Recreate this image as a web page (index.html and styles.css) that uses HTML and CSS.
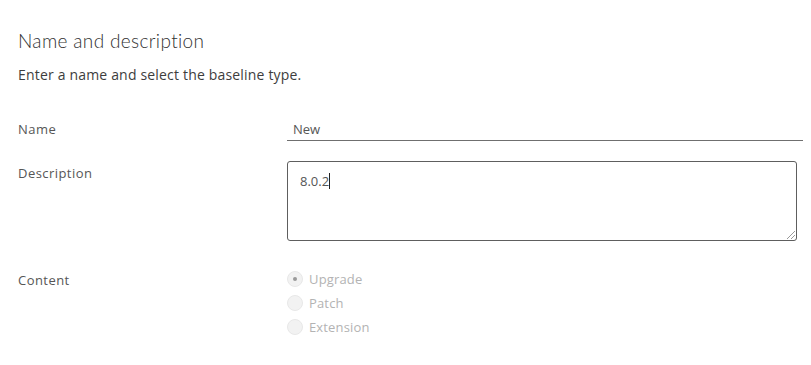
FILE: index.html
```html
<!DOCTYPE html>
<html lang="en">
    <head>
        <meta charset="UTF-8">
        <title>Name and description</title>
        <link rel="stylesheet" href="styles.css">
    </head>
    <body>
        <div class="wizard-page">
            <h2 class="page-title">Name and description</h2>
            <p class="page-intro">Enter a name and select the baseline type.</p>

            <form class="baseline-form">
                <div class="form-row name-row">
                    <label class="row-label" for="name">Name</label>
                    <div class="row-control">
                        <input class="line-input" type="text" id="name" value="New">
                    </div>
                </div>

                <div class="form-row desc-row">
                    <label class="row-label" for="description">Description</label>
                    <div class="row-control">
                        <div class="text-box" id="description">8.0.2<span class="caret"></span></div>
                    </div>
                </div>

                <div class="form-row">
                    <span class="row-label">Content</span>
                    <div class="row-control radio-list">
                        <label class="radio-item"><span class="radio-dot checked"></span>Upgrade</label>
                        <label class="radio-item"><span class="radio-dot"></span>Patch</label>
                        <label class="radio-item"><span class="radio-dot"></span>Extension</label>
                    </div>
                </div>
            </form>
        </div>
    </body>
</html>
```

FILE: styles.css
```css
body {
margin: 0;
padding: 0;
background-color: #ffffff;
font-family: "Open Sans", "Lato", sans-serif;
color: #565656;
}

.wizard-page {
padding: 29px 8px 0 18px;
}

.page-title {
margin: 0;
font-family: "Lato", sans-serif;
font-size: 19px;
font-weight: 300;
color: #313131;
line-height: 24px;
letter-spacing: 0.35px;
}

.page-intro {
margin: 13px 0 0 0;
font-size: 14px;
line-height: 18px;
color: #3d3d3d;
letter-spacing: 0.18px;
}

/* Form rows */
.baseline-form {
margin-top: 33px;
}

.form-row {
display: grid;
grid-template-columns: 269px 1fr;
}

.name-row {
margin-bottom: 20px;
}

.desc-row {
margin-bottom: 27px;
}

.row-label {
font-size: 13px;
line-height: 24px;
color: #565656;
letter-spacing: 0.45px;
}

.line-input {
display: block;
width: 516px;
height: 24px;
box-sizing: border-box;
border: none;
border-bottom: 1px solid #6f6f6f;
padding: 0 6px;
font-family: inherit;
font-size: 13px;
color: #565656;
outline: none;
}

.text-box {
position: relative;
width: 510px;
height: 80px;
box-sizing: border-box;
border: 1px solid #5e5e5e;
border-radius: 3px;
padding: 10px 12px;
font-size: 13px;
line-height: 18px;
color: #565656;
}

.text-box::after {
content: "";
position: absolute;
right: 1px;
bottom: 1px;
width: 8px;
height: 8px;
background: linear-gradient(135deg, transparent 45%, #999 45%, #999 52%, transparent 52%, transparent 70%, #999 70%, #999 77%, transparent 77%);
}

.caret {
display: inline-block;
width: 1px;
height: 16px;
background-color: #222;
vertical-align: -3px;
}

/* Radios */
.radio-list {
display: flex;
flex-direction: column;
margin-top: -1px;
}

.radio-item {
display: flex;
align-items: center;
gap: 6px;
font-size: 13px;
line-height: 24px;
color: #b3b3b3;
letter-spacing: 0.15px;
}

.radio-dot {
display: inline-flex;
align-items: center;
justify-content: center;
width: 16px;
height: 16px;
box-sizing: border-box;
border-radius: 50%;
background-color: #f2f2f2;
border: 1px solid #e8e8e8;
}

.radio-dot.checked::before {
content: "";
width: 4px;
height: 4px;
border-radius: 50%;
background-color: #9a9a9a;
}
```
